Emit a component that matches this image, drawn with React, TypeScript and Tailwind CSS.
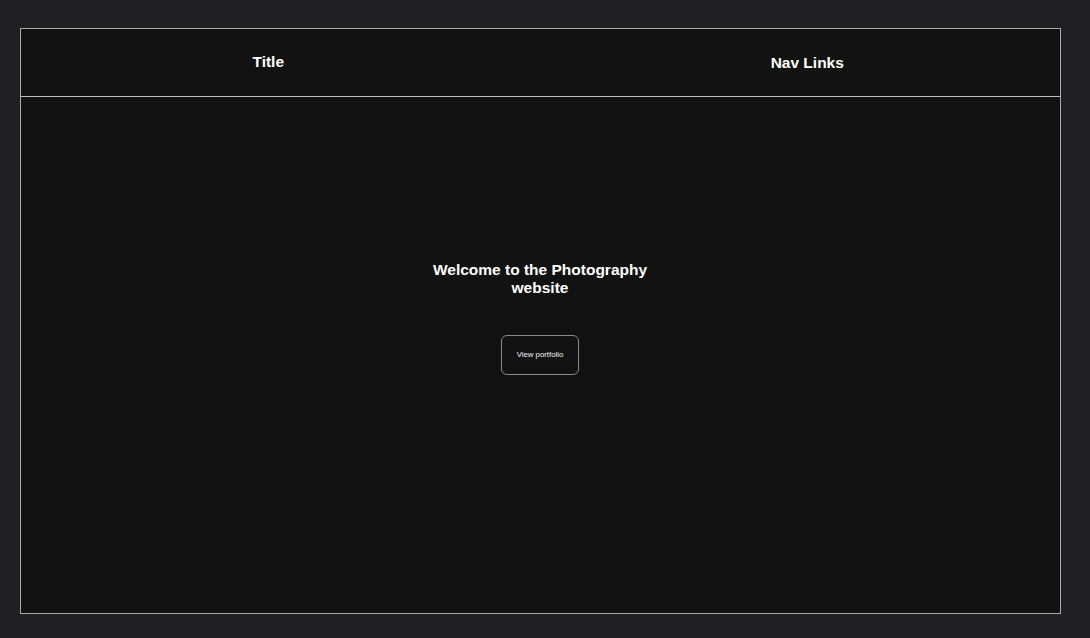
import React from "react";

const App: React.FC = () => {
  return (
    <div className="min-h-screen w-full bg-[#1f2023] pt-[28px] pl-[20px] pb-[24px] font-['Liberation_Sans',Arial,sans-serif]">
      <div className="flex h-[586px] w-[1041px] flex-col border border-[#ababab] bg-[#121212]">
        <header className="flex h-[68px] shrink-0 items-center border-b border-[#bdbdbd] text-white">
          <div className="flex w-1/2 shrink-0 justify-center pr-[25px] pb-[2px]">
            <h1 className="text-[15.5px] font-bold leading-5">Title</h1>
          </div>
          <div className="flex w-1/2 shrink-0 justify-center pl-[14px]">
            <nav className="text-[15.5px] font-bold leading-5">Nav Links</nav>
          </div>
        </header>
        <main className="flex flex-1 flex-col items-center justify-center pb-[74px] pr-[1px]">
          <h2 className="w-[224px] text-center text-[15.5px] font-bold leading-[18px] text-white">
            Welcome to the Photography website
          </h2>
          <button className="mt-[38px] h-[40px] w-[78px] rounded-md border border-[#8a8a8a] text-[7.8px] text-[#eef2f8]">
            View portfolio
          </button>
        </main>
      </div>
    </div>
  );
};

export default App;
